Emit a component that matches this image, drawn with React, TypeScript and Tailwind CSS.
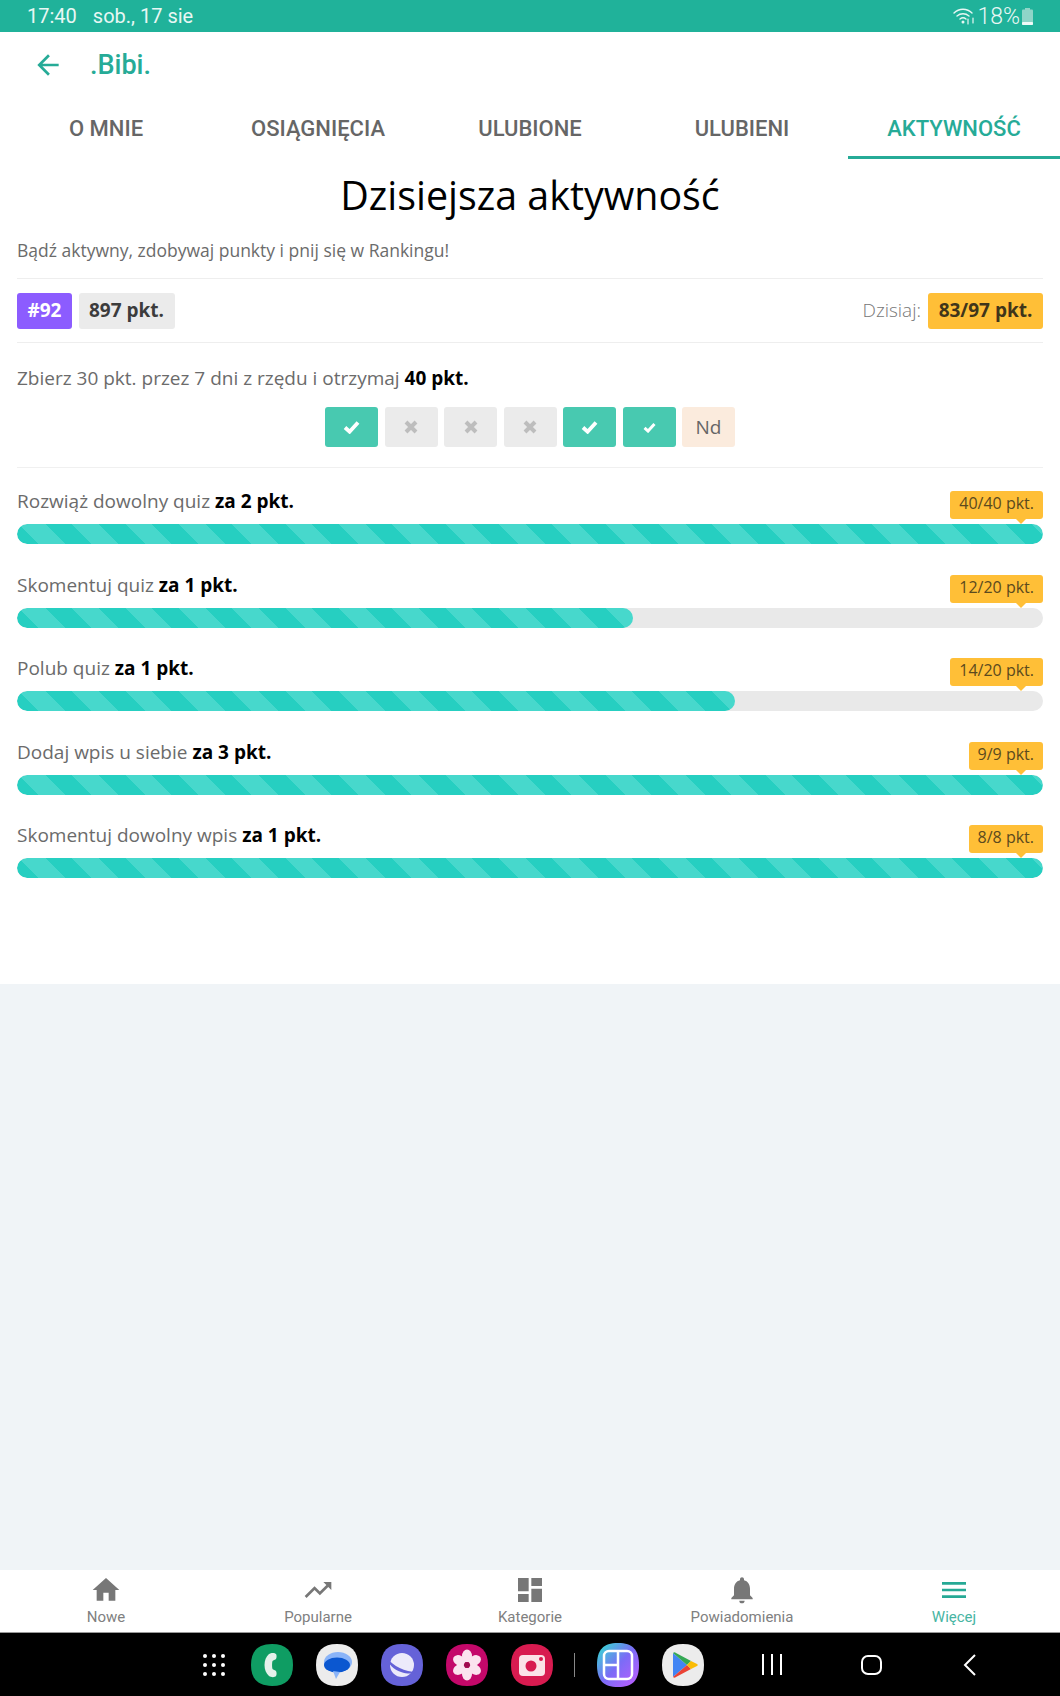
import React from "react";
import { MdHome, MdTrendingUp, MdDashboard, MdNotifications, MdMenu, MdArrowBack } from "react-icons/md";

const tabs = ["O MNIE", "OSIĄGNIĘCIA", "ULUBIONE", "ULUBIENI", "AKTYWNOŚĆ"];

const tasks = [
  { label: "Rozwiąż dowolny quiz", pts: "za 2 pkt.", tip: "40/40 pkt.", pct: 100 },
  { label: "Skomentuj quiz", pts: "za 1 pkt.", tip: "12/20 pkt.", pct: 60 },
  { label: "Polub quiz", pts: "za 1 pkt.", tip: "14/20 pkt.", pct: 70 },
  { label: "Dodaj wpis u siebie", pts: "za 3 pkt.", tip: "9/9 pkt.", pct: 100 },
  { label: "Skomentuj dowolny wpis", pts: "za 1 pkt.", tip: "8/8 pkt.", pct: 100 },
];

function Task({ label, pts, tip, pct }: { label: string; pts: string; tip: string; pct: number }) {
  return (
    <div className="h-[83.6px]">
      <div className="relative h-[50px]">
        <span className="absolute left-0 top-[14px] text-[19px] leading-[26px] text-[#6b6b6b]">
          {label} <b className="font-bold text-black">{pts}</b>
        </span>
        <div className="absolute right-0 top-[17px] h-[28px] rounded-[3px] bg-[#ffbf37] px-[9px] text-[16px] leading-[25px] text-[#5b4a1e]">
          {tip}
          <div className="absolute right-[17px] -bottom-[5px] h-0 w-0 border-x-[5px] border-t-[5px] border-x-transparent border-t-[#ffbf37]" />
        </div>
      </div>
      <div className="h-[20px] w-full overflow-hidden rounded-full bg-[#e9e9e9]">
        <div
          className="h-full rounded-full bg-[repeating-linear-gradient(45deg,#26cfc1_0,#26cfc1_15.3px,#47d8cc_15.3px,#47d8cc_34.2px,#26cfc1_34.2px,#26cfc1_37.7px)]"
          style={{ width: `${pct}%` }}
        />
      </div>
    </div>
  );
}

function Day({ kind, small }: { kind: "ok" | "no" | "nd"; small?: boolean }) {
  const base = "flex h-[40px] w-[53px] items-center justify-center rounded-[3px]";
  if (kind === "ok")
    return (
      <div className={`${base} bg-[#48c9b0]`}>
        <svg width={small ? 13 : 17} height={small ? 11 : 14} viewBox="0 0 17 14" fill="none">
          <path d="M2 7.5l4.6 4.2L15 2.5" stroke="#fff" strokeWidth="3.8" />
        </svg>
      </div>
    );
  if (kind === "no")
    return (
      <div className={`${base} bg-[#ebebeb]`}>
        <svg width="14" height="14" viewBox="0 0 14 14" fill="none">
          <path d="M2 2l10 10M12 2L2 12" stroke="#bdbdbd" strokeWidth="4" />
        </svg>
      </div>
    );
  return <div className={`${base} bg-[#fbebdd] text-[19px] text-[#666]`}>Nd</div>;
}

function NavItem({ icon, label, active }: { icon: React.ReactNode; label: string; active?: boolean }) {
  return (
    <div className={`flex flex-1 flex-col items-center pt-[5px] ${active ? "text-[#26a995]" : "text-[#777]"}`}>
      <div className="flex h-[30px] items-center justify-center">{icon}</div>
      <span className={`mt-[2px] text-[15px] leading-[20px] ${active ? "text-[#48b5a3]" : "text-[#808080]"}`}>{label}</span>
    </div>
  );
}

function AppIcon({ bg, children }: { bg: string; children: React.ReactNode }) {
  return (
    <svg width="42" height="42" viewBox="0 0 42 42">
      <path d="M21 0C35 0 42 7 42 21S35 42 21 42 0 35 0 21 7 0 21 0Z" fill={bg} />
      {children}
    </svg>
  );
}

export default function App() {
  return (
    <div className="flex h-[1696px] w-[1060px] flex-col overflow-hidden bg-[#f0f4f7] font-['Open_Sans',sans-serif]">
      {/* status bar */}
      <div className="flex h-[32px] items-center justify-between bg-[#20b29a] pl-[27px] pr-[27px] font-['Roboto',sans-serif] text-[20px] text-[#e8f7f4]">
        <div className="flex gap-[16px]">
          <span>17:40</span>
          <span>sob., 17 sie</span>
        </div>
        <div className="flex items-center gap-[2px]">
          <svg width="22" height="18" viewBox="0 0 22 18" fill="none" stroke="#e8f7f4" strokeWidth="1.4" strokeLinecap="round">
            <path d="M1 6c5-5 13-5 18 0" />
            <path d="M4 9c3.5-3 8.5-3 12 0" />
            <path d="M7 12c2-1.6 4-1.6 6 0" />
            <circle cx="10" cy="15" r="0.8" fill="#e8f7f4" />
            <path d="M15 12v5M20 11v5" strokeWidth="1.2" />
          </svg>
          <span className="text-[23px] font-light leading-none">18%</span>
          <svg width="11" height="17" viewBox="0 0 11 17">
            <rect x="3" y="0" width="5" height="2" fill="#8fd5c8" />
            <rect x="0" y="1.5" width="11" height="15.5" rx="1" fill="#8fd5c8" />
            <rect x="0" y="14" width="11" height="3" rx="1" fill="#f0faf8" />
          </svg>
        </div>
      </div>

      {/* header + tabs + content */}
      <div className="bg-white">
        <div className="flex h-[66px] items-center pl-[32px] font-['Roboto',sans-serif] text-[#26ab97]">
          <MdArrowBack className="text-[32px]" />
          <span className="ml-[26px] text-[27px] font-medium">.Bibi.</span>
        </div>
        <div className="flex h-[61px] font-['Roboto',sans-serif] text-[22px] font-medium">
          {tabs.map((t, i) => (
            <div
              key={t}
              className={`flex flex-1 items-center justify-center border-b-[3px] pt-[3px] ${
                i === 4 ? "border-[#26ab97] text-[#26ab97]" : "border-transparent text-[#666]"
              }`}
            >
              {t}
            </div>
          ))}
        </div>

        <div className="h-[825px] px-[17px]">
          <h1 className="pt-[8px] text-center text-[39.4px] font-medium leading-[56px] text-black">Dzisiejsza aktywność</h1>
          <p className="mt-[15px] text-[17.5px] leading-[24px] text-[#6b6b6b]">Bądź aktywny, zdobywaj punkty i pnij się w Rankingu!</p>

          <div className="mt-[16px] flex h-[65px] items-center justify-between border-y border-[#eeeeee]">
            <div className="flex gap-[6.5px] text-[19px] font-bold">
              <span className="flex h-[36px] w-[55px] items-center justify-center rounded-[3px] bg-[#8c5cff] text-white">#92</span>
              <span className="flex h-[36px] w-[96px] items-center justify-center rounded-[3px] bg-[#ebebeb] text-[#3c3c3c]">897 pkt.</span>
            </div>
            <div className="flex items-center gap-[7px]">
              <span className="text-[19px] font-light text-[#777]">Dzisiaj:</span>
              <span className="flex h-[36px] w-[115px] items-center justify-center rounded-[3px] bg-[#ffbf37] text-[19px] font-bold text-[#40351a]">83/97 pkt.</span>
            </div>
          </div>

          <p className="mt-[22px] text-[19px] leading-[26px] text-[#6b6b6b]">
            Zbierz 30 pkt. przez 7 dni z rzędu i otrzymaj <b className="font-bold text-black">40 pkt.</b>
          </p>
          <div className="mt-[16px] flex justify-center gap-[6.5px]">
            <Day kind="ok" />
            <Day kind="no" />
            <Day kind="no" />
            <Day kind="no" />
            <Day kind="ok" />
            <Day kind="ok" small />
            <Day kind="nd" />
          </div>
          <div className="mt-[20px] border-t border-[#f0f0f0]">
            <div className="pt-[6px]">
              {tasks.map((t) => (
                <Task key={t.label} {...t} />
              ))}
            </div>
          </div>
        </div>
      </div>

      <div className="flex-1" />

      {/* bottom nav */}
      <div className="flex h-[62px] bg-white font-['Roboto',sans-serif]">
        <NavItem icon={<MdHome className="text-[32px]" />} label="Nowe" />
        <NavItem icon={<MdTrendingUp className="text-[32px]" />} label="Popularne" />
        <NavItem icon={<MdDashboard className="text-[32px]" />} label="Kategorie" />
        <NavItem icon={<MdNotifications className="text-[32px]" />} label="Powiadomienia" />
        <NavItem icon={<MdMenu className="text-[32px]" />} label="Więcej" active />
      </div>
      <div className="h-px bg-[#999]" />

      {/* android nav */}
      <div className="relative flex h-[63px] items-center bg-black">
        <div className="ml-[203px] grid grid-cols-3 gap-x-[5px] gap-y-[5px]">
          {Array.from({ length: 9 }).map((_, i) => (
            <span key={i} className="h-[4px] w-[4px] rounded-full bg-white" />
          ))}
        </div>
        <div className="ml-[26px] flex items-center gap-[23px]">
          <AppIcon bg="#0f9d63">
            <path d="M18 10c2-1.500 6-1.500 7 0 .8 1.200.8 3.500 0 5-.5 1-3 1-3.500 2-.6 2-.6 6 0 8 .5 1 3 1 3.500 2 .8 1.500.8 3.800 0 5-1 1.500-5 1.500-7 0-3-2.500-4.500-6.500-4.500-11s1.500-8.500 4.500-11Z" fill="#e4f1ea" />
          </AppIcon>
          <AppIcon bg="#ececec">
            <ellipse cx="22" cy="18" rx="14" ry="10" fill="#8ab4f8" />
            <ellipse cx="21" cy="21" rx="13" ry="7.500" fill="#0b57d0" />
            <path d="M17 27l7 1-4 7Z" fill="#8ab4f8" />
          </AppIcon>
          <AppIcon bg="#6562d8">
            <circle cx="21" cy="21" r="12" fill="#eceafa" />
            <path d="M6 14c6 8 18 14 30 14-4 2-10 2-16 0C13 26 7 20 6 14Z" fill="#6562d8" />
          </AppIcon>
          <AppIcon bg="#c4086a">
            {[0, 60, 120, 180, 240, 300].map((a) => (
              <ellipse key={a} cx="21" cy="12" rx="5" ry="6.500" fill="#fbe3ee" transform={`rotate(${a} 21 21)`} />
            ))}
            <circle cx="21" cy="21" r="3" fill="#a10b4e" />
          </AppIcon>
          <AppIcon bg="#d81b50">
            <rect x="8" y="11" width="26" height="21" rx="4" fill="#fbe3e8" />
            <circle cx="20" cy="22" r="5.500" fill="#d81b50" />
            <circle cx="30" cy="15" r="2" fill="#d81b50" />
          </AppIcon>
        </div>
        <div className="ml-[21px] h-[24px] w-px bg-[#888]" />
        <div className="ml-[22px] flex items-center gap-[23px]">
          <svg width="42" height="44" viewBox="0 0 42 44">
            <defs>
              <linearGradient id="tile" x1="0" y1="0" x2="1" y2="1">
                <stop offset="0" stopColor="#2ee6d0" />
                <stop offset="0.5" stopColor="#7b6cf6" />
                <stop offset="1" stopColor="#c05cff" />
              </linearGradient>
            </defs>
            <path d="M21 0C36 0 42 7 42 22S36 44 21 44 0 37 0 22 6 0 21 0Z" fill="url(#tile)" />
            <rect x="7" y="8" width="28" height="28" rx="5" fill="none" stroke="#fff" strokeWidth="2.500" />
            <path d="M21 8v28M7 22h14" stroke="#fff" strokeWidth="2.500" />
          </svg>
          <AppIcon bg="#ececec">
            <path d="M11 9l14 12-14 12Z" fill="#4285f4" />
            <path d="M11 9c1-1 2-1 3 0l15 8-4 4Z" fill="#34a853" />
            <path d="M11 33c1 1 2 1 3 0l15-8-4-4Z" fill="#ea4335" />
            <path d="M29 17l6 3c1 .7 1 1.300 0 2l-6 3-4-4Z" fill="#fbbc04" />
          </AppIcon>
        </div>
        <div className="absolute left-[762px] flex gap-[7px]">
          <span className="h-[21px] w-[2px] bg-white" />
          <span className="h-[21px] w-[2px] bg-white" />
          <span className="h-[21px] w-[2px] bg-white" />
        </div>
        <div className="absolute left-[861px] h-[20px] w-[21px] rounded-[7px] border-2 border-white" />
        <svg className="absolute left-[963px]" width="14" height="24" viewBox="0 0 14 24" fill="none">
          <path d="M12 2L2 12l10 10" stroke="#fff" strokeWidth="2" />
        </svg>
      </div>
    </div>
  );
}
